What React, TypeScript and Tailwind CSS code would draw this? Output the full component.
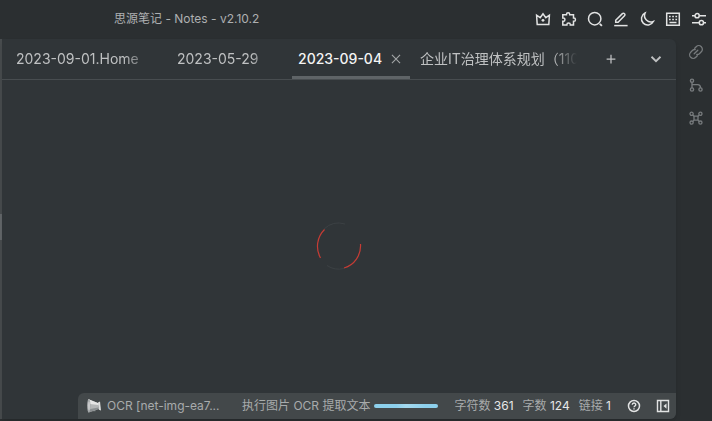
import * as React from 'react';

type IconProps = { children: React.ReactNode; className?: string };

function Icon({ children, className = 'size-4' }: IconProps) {
  return (
    <svg
      viewBox="0 0 16 16"
      className={className}
      fill="none"
      stroke="currentColor"
      strokeWidth="1.5"
      aria-hidden="true"
    >
      {children}
    </svg>
  );
}

const toolbar = [
  {
    label: 'Account',
    icon: (
      <>
        <path d="M2.2 13.6L1.6 4.2L5.2 6.6L8 2.7L10.8 6.6L14.4 4.2L13.8 13.6Z" />
        <circle cx="8" cy="9.3" r="1.4" fill="currentColor" stroke="none" />
      </>
    ),
  },
  {
    label: 'Plugins',
    icon: (
      <path d="M1.8 3.7H5.5V3.2C5.5 1.2 8.7 1.2 8.7 3.2V3.7H12.5V7.1H12.9C15 7.1 15 10.3 12.9 10.3H12.5V14H9.3V13.5C9.3 11.4 5.9 11.4 5.9 13.5V14H1.8V10.3H2.4C4.4 10.3 4.4 7.1 2.4 7.1H1.8Z" />
    ),
  },
  {
    label: 'Search',
    icon: (
      <>
        <circle cx="7.7" cy="7.7" r="6.2" />
        <path d="M12.8 12.8L14.9 14.9" strokeWidth="1.8" />
      </>
    ),
  },
  {
    label: 'Edit mode',
    icon: (
      <>
        <path d="M2.7 9.3L9.4 2.6C10 2 10.8 2 11.3 2.6L11.5 2.8C12.1 3.4 12.1 4.2 11.5 4.8L5.1 11.3H2.7Z" />
        <path d="M1.2 14.6H14.6" />
      </>
    ),
  },
  {
    label: 'Appearance',
    icon: <path d="M6.1 2A6.3 6.3 0 1 0 14.4 10.5A6.4 6.4 0 0 1 6.1 2Z" />,
  },
  {
    label: 'Keyboard',
    icon: (
      <>
        <path d="M1.7 2.2H14.3V14.3H1.7Z" />
        <path d="M4 5.5H12.2M4 8.4H12.2" strokeDasharray="1.7 1.5" />
        <path d="M4.5 11.5H11.5" />
      </>
    ),
  },
  {
    label: 'Settings',
    icon: (
      <>
        <path d="M1 4.7H4M8.2 4.7H15M1 11.7H8.3M12.5 11.7H15" />
        <circle cx="6.1" cy="4.7" r="2.1" />
        <circle cx="10.4" cy="11.7" r="2.1" />
      </>
    ),
  },
];

const dock = [
  {
    label: 'Backlinks',
    icon: (
      <g strokeLinecap="round" strokeWidth="1.3">
        <path d="M6.7 4.2L8.2 2.7A3.6 3.6 0 0 1 13.3 7.8L11.4 9.7A3.4 3.4 0 0 1 8.8 10.5" />
        <path d="M9.3 11.8L7.8 13.3A3.6 3.6 0 0 1 2.7 8.2L4.6 6.3A3.4 3.4 0 0 1 7.2 5.5" />
        <path d="M6.2 9.8L9.8 6.2" />
      </g>
    ),
  },
  {
    label: 'Graph view',
    icon: (
      <g strokeWidth="1.4">
        <circle cx="4" cy="3.7" r="1.6" />
        <circle cx="4" cy="12.5" r="1.6" />
        <circle cx="12.5" cy="12.5" r="1.6" />
        <path d="M4 5.2V11M4 7.6H9.6Q12.5 7.6 12.5 11" />
      </g>
    ),
  },
  {
    label: 'Global graph',
    icon: (
      <g strokeWidth="1.3">
        <circle cx="3.6" cy="3.8" r="1.6" />
        <circle cx="12.4" cy="3.8" r="1.6" />
        <circle cx="3.6" cy="12.6" r="1.6" />
        <circle cx="12.4" cy="12.6" r="1.6" />
        <path d="M6 6.2H10V10.2H6Z" />
        <path d="M4.7 4.9L6 6.2M11.3 4.9L10 6.2M4.7 11.5L6 10.2M11.3 11.5L10 10.2" />
      </g>
    ),
  },
];

function TopBar() {
  return (
    <header className="flex h-[39px] items-center justify-between bg-[#2b2f31] pr-[5px] pb-[2px] pl-[114px]">
      <h1 className="text-xs text-[#aeb0b1]">思源笔记 - Notes - v2.10.2</h1>
      <nav className="flex gap-[10px] text-[#e2e3e3]">
        {toolbar.map((item) => (
          <button key={item.label} type="button" aria-label={item.label}>
            <Icon>{item.icon}</Icon>
          </button>
        ))}
      </nav>
    </header>
  );
}

function TabBar() {
  return (
    <div className="flex h-[41px] items-stretch border-b border-[#484d50] text-sm text-[#bfc1c2]">
      <div role="tablist" className="flex items-stretch">
        <button
          type="button"
          role="tab"
          aria-selected="false"
          className="ml-[14px] w-[126px] overflow-hidden text-left whitespace-nowrap [mask-image:linear-gradient(to_right,black_85%,#0006)]"
        >
          2023-09-01.Home
        </button>
        <button
          type="button"
          role="tab"
          aria-selected="false"
          className="ml-[35px] w-[87px] overflow-hidden text-left whitespace-nowrap [mask-image:linear-gradient(to_right,black_85%,#0006)]"
        >
          2023-05-29
        </button>
        <div className="ml-7 flex w-[118px] items-stretch border-b-3 border-[#5f6467] pt-[3px] pl-[6px]">
          <button
            type="button"
            role="tab"
            aria-selected="true"
            className="flex-1 text-left font-medium whitespace-nowrap text-[#f4f4f4]"
          >
            2023-09-04
          </button>
          <button type="button" aria-label="Close tab" className="pr-[9px] text-[#a2a5a6]">
            <Icon className="size-[10px]">
              <path d="M1.5 1.5L14.5 14.5M14.5 1.5L1.5 14.5" strokeWidth="1.8" />
            </Icon>
          </button>
        </div>
        <button
          type="button"
          role="tab"
          aria-selected="false"
          className="ml-[10px] w-[157px] overflow-hidden text-left whitespace-nowrap [mask-image:linear-gradient(to_right,black_85%,transparent)]"
        >
          企业IT治理体系规划（110）
        </button>
      </div>
      <button type="button" aria-label="New tab" className="ml-[29px]">
        <Icon className="size-[10px]">
          <path d="M8 1V15M1 8H15" strokeWidth="2" />
        </Icon>
      </button>
      <button type="button" aria-label="More tabs" className="mr-[14px] ml-auto">
        <Icon className="size-3">
          <path d="M2 5L8 11L14 5" strokeWidth="2.4" />
        </Icon>
      </button>
    </div>
  );
}

function Spinner() {
  return (
    <svg viewBox="0 0 46 48" className="h-12 w-[46px]" fill="none" role="img" aria-label="Loading">
      <g stroke="#3c4144">
        <path d="M8 7A22 23 0 0 1 29 2" />
        <path d="M11 43.5A22 23 0 0 0 28 46.5" />
      </g>
      <g stroke="#c63c35" strokeWidth="1.2">
        <path d="M44.5 22A22 23 0 0 1 28 46" />
        <path d="M8.5 7.5A22 23 0 0 0 4.5 36" />
      </g>
    </svg>
  );
}

function Megaphone() {
  return (
    <svg viewBox="0 0 16 16" className="size-4" aria-hidden="true">
      <path d="M5.5 11L6.5 13.2H9.5L9.8 10.5Z" fill="#7d8285" />
      <path d="M2 1L12.5 5.2V11L2.5 14.6Z" fill="#b4b6b7" />
      <path d="M2.5 1.2L12.5 5.2V7L4 6Z" fill="#e6e6e6" />
      <path d="M2.6 14.5L12.5 11V9.4L4 11Z" fill="#8b8f91" />
      <ellipse cx="2.8" cy="7.8" rx="1.7" ry="6.8" fill="#a5a8aa" />
      <ellipse cx="3" cy="7.8" rx="0.8" ry="4.4" fill="#d2d3d4" />
      <path d="M12 4.4L14 3.6L15 12.6L12.8 11.8Z" fill="#dedfdf" />
    </svg>
  );
}

const stats = [
  { label: '字符数', value: 361 },
  { label: '字数', value: 124 },
  { label: '链接', value: 1 },
];

function StatusBar() {
  return (
    <footer className="ml-[76px] flex h-[26px] items-center rounded-tl-md rounded-br-md bg-[#43484a] pr-[6px] pl-2 text-xs whitespace-nowrap text-[#a8abac]">
      <Megaphone />
      <span className="ml-[5px] w-[114px] truncate">OCR [net-img-ea7...</span>
      <span className="ml-auto">执行图片 OCR 提取文本</span>
      <div
        role="progressbar"
        aria-label="OCR"
        className="ml-1 h-1 w-16 rounded-full bg-linear-to-r from-[#8dd0ec] from-35% via-[#a5d9ee] to-[#8dd0ec] to-80%"
      />
      <div className="ml-4 flex gap-[9px]">
        {stats.map((stat) => (
          <span key={stat.label}>
            {stat.label} <span className="text-[#e6e7e7]">{stat.value}</span>
          </span>
        ))}
      </div>
      <button type="button" aria-label="Help" className="ml-4 text-[#e2e3e3]">
        <Icon className="size-[14px]">
          <circle cx="8" cy="8" r="6.3" strokeWidth="1.7" />
          <path d="M6 6.7C6 4 10 4 10 6.5C10 8 8 8 8 9.5" strokeWidth="1.6" />
          <path d="M8 10.5V12" strokeWidth="1.6" />
        </Icon>
      </button>
      <button type="button" aria-label="Toggle dock" className="ml-[15px] text-[#e2e3e3]">
        <Icon className="size-[14px]">
          <path d="M1.7 1.7H14.3V14.3H1.7ZM5.5 2V14" strokeWidth="1.6" />
          <path d="M12 5V11L8.5 8Z" fill="currentColor" stroke="none" />
        </Icon>
      </button>
    </footer>
  );
}

export default function App() {
  return (
    <div className="flex min-h-screen flex-col bg-[#2b2f31] pb-[2px] font-['Inter','Noto_Sans_CJK_SC',sans-serif]">
      <TopBar />
      <div className="flex flex-1">
        <div className="flex w-[2px] flex-col justify-center bg-[#484c4e] pb-1">
          <div className="h-[26px] bg-[#63676a]" />
        </div>
        <div className="flex min-w-0 flex-1 flex-col rounded-tr-md rounded-br-md bg-[#303538] shadow-md">
          <TabBar />
          <main className="flex flex-1 items-center justify-center pt-[18px]">
            <Spinner />
          </main>
          <StatusBar />
        </div>
        <aside className="flex w-9 flex-col items-center gap-[17px] pt-[5px] pl-1 text-[#777b7d]">
          {dock.map((item) => (
            <button key={item.label} type="button" aria-label={item.label}>
              <Icon>{item.icon}</Icon>
            </button>
          ))}
        </aside>
      </div>
    </div>
  );
}
